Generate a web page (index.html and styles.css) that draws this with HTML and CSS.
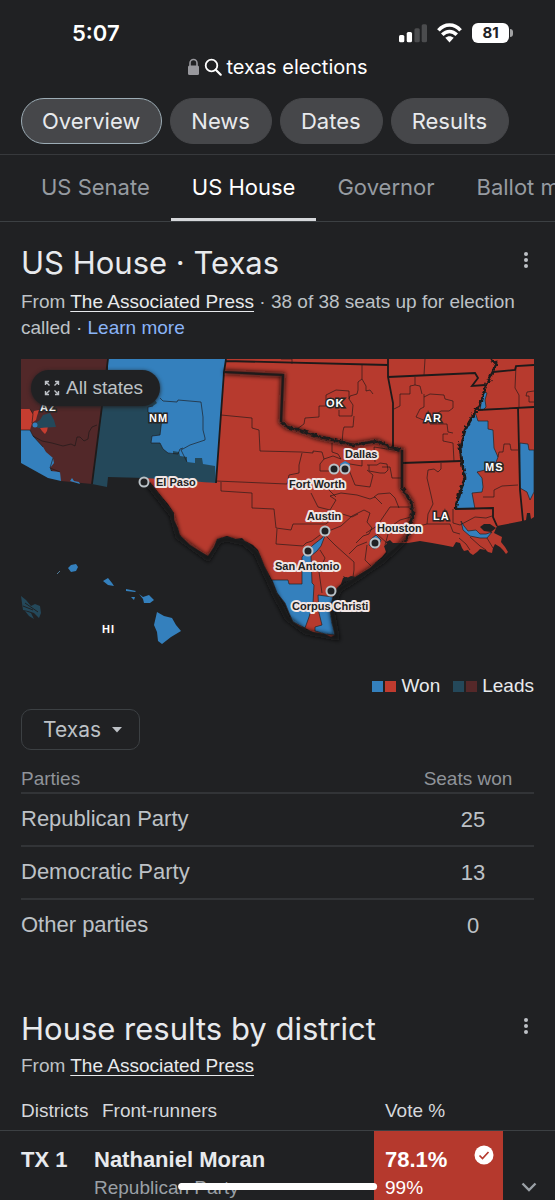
FILE: index.html
```html
<!DOCTYPE html>
<html lang="en">
<head>
<meta charset="utf-8">
<meta name="viewport" content="width=device-width, initial-scale=1">
<title>texas elections</title>
<link rel="stylesheet" href="styles.css">
</head>
<body>
<header class="top">
  <div class="status">
    <span class="clock">5:07</span>
    <div class="indicators">
      <svg width="28" height="20" viewBox="0 0 29 20" aria-hidden="true"><rect x="0" y="12" width="5.500" height="7.500" rx="1.600" fill="#fff"/><rect x="8" y="9" width="5.500" height="10.500" rx="1.600" fill="#fff"/><rect x="16" y="5" width="5.500" height="14.500" rx="1.600" fill="#4b4c4e"/><rect x="23.500" y="1" width="5.500" height="18.500" rx="1.600" fill="#4b4c4e"/></svg>
      <svg width="25" height="20" viewBox="0 0 26 20" aria-hidden="true"><g fill="none" stroke="#fff" stroke-width="3.700"><path d="M1.500 7.200C8-.2 18-.2 24.500 7.200"/><path d="M5.500 11.800c4.300-4.500 10.700-4.500 15 0"/></g><path d="M8.600 15c2.600-2.300 6.200-2.300 8.800 0L13 19.800z" fill="#fff"/></svg>
      <span class="battery">81</span>
    </div>
  </div>
  <div class="address">
    <svg width="13" height="18" viewBox="0 0 13 18" aria-hidden="true"><rect x="1" y="7.500" width="11" height="9.500" rx="1.500" fill="#98989d"/><path d="M3 8V5a3.500 3.500 0 0 1 7 0v3" fill="none" stroke="#98989d" stroke-width="1.600"/></svg>
    <svg width="18" height="18" viewBox="0 0 18 18" aria-hidden="true"><circle cx="7.500" cy="7.500" r="5.800" fill="none" stroke="#fff" stroke-width="1.800"/><path d="M11.700 11.700l5 5" stroke="#fff" stroke-width="2.200" stroke-linecap="round"/></svg>
    <span>texas elections</span>
  </div>
  <div class="chips">
    <button class="chip chip-on" type="button">Overview</button>
    <button class="chip" type="button">News</button>
    <button class="chip" type="button">Dates</button>
    <button class="chip" type="button">Results</button>
  </div>
</header>
<nav class="tabs">
  <a class="tab" href="#senate">US Senate</a>
  <a class="tab tab-on" href="#house">US House</a>
  <a class="tab" href="#governor">Governor</a>
  <a class="tab" href="#ballot">Ballot measures</a>
</nav>
<main>
  <section class="panel" id="house">
    <div class="heading">
      <h2>US House · Texas</h2>
      <button class="more" type="button" aria-label="More options"><svg width="6" height="18" viewBox="0 0 6 18"><g fill="#bdc1c6"><circle cx="3" cy="3" r="2"/><circle cx="3" cy="9" r="2"/><circle cx="3" cy="15" r="2"/></g></svg></button>
    </div>
    <p class="source">From <a class="src" href="#ap">The Associated Press</a> · 38 of 38 seats up for election called · <a class="learn" href="#more">Learn more</a></p>
    <div class="map">
      <svg class="map-art" viewBox="21 359 513 300" role="img" aria-label="House results map">
        <defs>
          <filter id="rough" x="-5%" y="-5%" width="110%" height="110%"><feTurbulence type="fractalNoise" baseFrequency="0.25" numOctaves="2" seed="4" result="n"/><feDisplacementMap in="SourceGraphic" in2="n" scale="5" xChannelSelector="R" yChannelSelector="G"/></filter>
          <filter id="soft" x="-10%" y="-10%" width="120%" height="120%"><feGaussianBlur stdDeviation="2"/></filter>
        </defs>
        <path fill="#3480bd" d="M108 359H226L224 372 216 483 145 478 108 470z"/>
        <path fill="#24485a" d="M105 385L148 390 157 403 153 406 148 407 148 412 154 417 162 418 160 435 152 436 151 443 160 443 163 449 168 453 173 454 173 451 179 452 180 456 187 457 187 462 195 463 195 458 202 458 203 464 215 466 216 483 145 478 108 477 107 487 92 484z"/>
        <path fill="#522829" d="M21 359H108L92 484 61 481 50 468 21 432z"/>
        <path fill="#3480bd" d="M21 430L30 430 33 436 43 447 46 452 53 458 54 463 50 468 51 471 60 472 61 481 48 478 21 463zM70 481L72 478 74 481 79 482 80 484z"/>
        <path fill="#c63d30" d="M21 409L30 409 33 414 34 411 39 410 37 416 36 420 32 423 30 430 21 430zM40 428L48 426 47 431 45 434 42 431z"/>
        <path fill="#24485a" d="M34 424L40 420 43 415 50 413 54 420 56 427 38 428z"/>
        <circle cx="35" cy="425" r="2.500" fill="#3480bd"/>
        <path class="thin" d="M21 430H30L33 436 43 447M30 409L33 414 32 423M33 436L42 441 52 443 63 446 71 444 75 446 77 437 80 437 84 441 88 439 89 432 92 427 97 425M153 406L148 407 148 412 154 417 162 418 160 435 152 436 151 443 160 443 163 449 168 453 178 454 180 449 183 448M160 398L163 401 177 402 178 400 201 402 203 417 203 430 205 438 205 440 190 445 181 450 187 462M53 458L50 468 60 472"/>
        <path class="edge" fill="none" d="M108 359L92 484"/>
        <path fill="#b73a2e" d="M226 359H534V517L531 519 530 513 527 513 526 520 522 521 512 523 502 525 497 526 494 533 502 537 501 542 505 547 508 552 506 554 503 550 500 547 495 544 493 548 492 553 488 552 486 550 480 549 477 552 473 555 470 553 468 550 464 551 462 548 460 543 456 542 453 547 443 545 432 543 420 541 408 543 398 543 390 549 388 543 384 546 386 552 382 557 376 562 370 568 360 574 350 580 347 577 343 578 341 584 337 588 333 597 330 610 332 623 335 635 331 637 325 634 313 632 305 628 299 626 293 622 289 613 285 603 277 593 272 580 265 567 258 550 253 545 245 541 242 538 236 539 227 536 217 539 214 547 208 556 198 550 190 545 180 535 178 528 174 520 174 513 168 504 162 497 150 482 145 478 216 483 224 372z"/>
        <path fill="#202122" d="M480 527L484 524 490 524 496 528 491 532 484 531z"/>
        <g fill="#3480bd" stroke="#222" stroke-width=".7">
          <path d="M475 412L478 421 488 421 488 429 493 430 494 448 498 457 495 465 485 470 477 472 482 478 483 487 482 492 472 493 475 509 455 509 460 492 465 478 462 463 460 447 465 430zM480 410L482 398 485 392 487 393 485 400 486 407 483 410zM520 443L528 444 529 450 534 450V492L530 500 527 492 520 488z"/>
          <path d="M461 521L464 526 468 531 476 530 480 534 486 534 492 532 487 538 480 538 470 536 463 530z"/>
          <path d="M272 580L288 580 289 584 302 584 302 557 307 551 313 545 322 538 326 533 321 546 317 551 311 556 312 583 314 585 313 603 309 617 305 628 293 622 289 613 285 603 277 593zM318 595L333 597 330 610 332 623 335 635 325 634 315 631 315 627 322 625 319 613z"/>
          <path d="M371 539L376 535 381 540 379 546 374 549 369 545z"/>
        </g>
        <g class="thin">
          <path d="M221 415L252 418 252 428 259 430 260 451 301 452 313 453 313 451 322 452 324 459M216 481L287 484 289 475 299 473 299 465 302 453M221 482L221 491 252 493 252 508 274 509 276 528 291 530 293 524 326 524 339 513 352 517 358 514M276 544L277 529M276 544L303 546 306 543 312 541 320 535"/>
          <path d="M332 443L332 452 338 454 341 459 333 456 324 459 320 464 320 471 333 471 344 463 362 466 362 459M349 470L355 485 370 487 373 475 367 470M367 465H377L380 463 387 464 388 470 385 473 380 473 369 471V465M311 493L318 507 330 510 336 500 330 496 341 493 357 495 370 499 375 497 382 504M374 497L378 494 390 493 395 498 399 508M375 462L374 447 400 451M336 497L326 487M402 478H392L390 467 382 467"/>
          <path d="M326 532L341 526 352 516 364 510 370 513 367 522 372 528 369 534 363 536 356 543M325 535L335 545 345 554 354 562 354 570 353 577M320 550L325 558 319 572 322 593M349 554L357 546 367 542M366 533L377 526 390 507M390 507L413 507M377 534L388 544M367 545L365 560 371 566M385 545L390 527 400 520 411 517"/>
          <path d="M281 359H292V364M362 365V379L358 382V390L357 394 350 396 349 399M349 399V391L336 390 326 395 326 406 319 406 319 417 305 418 304 424 297 429M349 399L353 405 352 416H339V410M354 416L353 427 344 427 343 431 342 443M362 379L366 386 366 391 370 390 373 394M425 359L424 375M400 394V406L394 409M400 394H410V386L415 385V377M415 385L420 386 422 394M424 397L430 394 444 395 445 399 453 401 453 408 449 411 441 411 426 421 416 417 420 409 424 407V394M430 424L447 424 448 432 453 433M448 434H443V441L453 443 454 461"/>
          <path d="M441 463V469L438 472 434 469 428 470 427 478 431 495 433 504 428 514 427 524M427 524H450L453 532 460 534M453 509V523L460 525 475 517 486 518 492 516M427 524L415 527M498 457L499 452H503L504 444 510 444 511 450 518 450M483 497H494V490L502 486 518 485M516 366L515 388 519 395 519 408M534 391L527 392 526 396 529 396 529 402 534 402M459 538L466 544 470 550M470 537L480 546 486 550M487 538L493 548"/>
        </g>
        <g class="edge" fill="none">
          <path d="M226 361L388 365M388 359V377L393 403V447M388 377L475 373 478 378 472 386 485 385M493 372L515 370 516 366 534 365M478 410L534 407M518 408L520 490 523 521M402 463L461 461M455 509L493 508V517L497 526M216 483L224 372 226 359"/>
          <path class="river" filter="url(#rough)" d="M490 359L496 363 493 372 486 385 482 400 475 412 465 430 460 447 462 463 465 478 460 492 455 509"/>
        </g>
        <path fill="none" stroke="#141414" stroke-opacity=".8" stroke-width="5" filter="url(#soft)" d="M224 372L283 375 281 422 287 427 300 431 317 437 334 441 353 445 377 441 390 448 402 450V488L411 502 413 512 408 535 400 545 384 560 352 582 339 590 332 610 337 638 305 632 287 618 275 595 256 553 244 543 227 539 219 541 208 559 178 537 172 515 148 484"/>
        <path fill="none" stroke="#1e1a1a" stroke-width="2.200" d="M224 372L283 375 281 422M402 450V488"/>
        <path fill="none" stroke="#1e1a1a" stroke-width="2.600" filter="url(#rough)" d="M281 422L287 427 300 430 317 436 334 440 353 445 377 441 390 447 402 450M402 488L411 502 413 512 408 535 405 542"/>
        <path fill="#202122" d="M388 546L386 542 390 540 393 543 400 543 394 549 387 554zM346 582L343 576 347 578 351 576 356 577z"/>
        <g fill="#3480bd">
          <path d="M68 568L71 565 76 564 78 567 76 571 71 572zM103 581L108 578 112 583 114 586 108 585zM126 589L136 591 135 592 126 591zM131 597L135 597 134 600zM139 594L143 597 149 595 154 600 150 603 144 603 143 599zM157 612L164 616 172 618 176 625 181 631 171 637 162 644 158 641 157 632 154 625z"/>
          <path d="M57 574L60 571" stroke="#507b98" fill="none"/>
          <path fill="#24485a" d="M21 596L26 600 31 606 35 604 40 606 41 613 39 618 34 613 28 611 23 610zM25 611L31 613 34 619 29 616z"/>
          <path d="M25 603L38 612M23 606L33 610" stroke="#202122" fill="none"/>
        </g>
        <g class="state">
          <text x="40" y="411">AZ</text><text x="149" y="422">NM</text><text x="326" y="407">OK</text><text x="424" y="422">AR</text><text x="485" y="471">MS</text><text x="433" y="520">LA</text><text x="102" y="633">HI</text>
        </g>
        <path d="M340 464L345 461 350 464 349 472 342 472z" fill="#3480bd"/>
        <g class="pin"><circle cx="144" cy="482" r="4.500"/><circle cx="334" cy="469" r="4.500"/><circle cx="345" cy="469" r="4.500"/><circle cx="325" cy="531" r="4.500"/><circle cx="308" cy="551" r="4.500"/><circle cx="375" cy="543" r="4.500"/><circle cx="331" cy="591" r="4.500"/></g>
        <g class="city">
          <text x="156" y="486">El Paso</text><text x="345" y="458">Dallas</text><text x="289" y="488">Fort Worth</text><text x="307" y="520">Austin</text><text x="377" y="532">Houston</text><text x="275" y="570">San Antonio</text><text x="292" y="610">Corpus Christi</text>
        </g>
      </svg>
      <button class="all" type="button"><svg width="16" height="16" viewBox="0 0 16 16" aria-hidden="true"><path d="M1.500 5V1.500H5M1.500 1.500L5.500 5.500M11 1.500H14.500V5M14.500 1.500L10.500 5.500M1.500 11V14.500H5M1.500 14.500L5.500 10.500M14.500 11V14.500H11M14.500 14.500L10.500 10.500" fill="none" stroke="#bdc1c6" stroke-width="1.400"/></svg>All states</button>
    </div>
    <div class="legend">
      <span class="key"><i class="sw blue"></i><i class="sw red"></i>Won</span>
      <span class="key"><i class="sw teal"></i><i class="sw maroon"></i>Leads</span>
    </div>
    <div class="picker">
      <select class="select" aria-label="State"><option>Texas</option></select>
      <svg class="caret" width="10" height="6" viewBox="0 0 10 6" aria-hidden="true"><path d="M0 0H10L5 5.500z" fill="#bdc1c6"/></svg>
    </div>
    <table class="seats">
      <thead><tr><th scope="col">Parties</th><th scope="col" class="num">Seats won</th></tr></thead>
      <tbody>
        <tr><td>Republican Party</td><td class="num">25</td></tr>
        <tr><td>Democratic Party</td><td class="num">13</td></tr>
        <tr><td>Other parties</td><td class="num">0</td></tr>
      </tbody>
    </table>
  </section>
  <section class="districts">
    <div class="panel">
      <div class="heading">
        <h2>House results by district</h2>
        <button class="more" type="button" aria-label="More options"><svg width="6" height="18" viewBox="0 0 6 18"><g fill="#bdc1c6"><circle cx="3" cy="3" r="2"/><circle cx="3" cy="9" r="2"/><circle cx="3" cy="15" r="2"/></g></svg></button>
      </div>
      <p class="source">From <a class="src" href="#ap">The Associated Press</a></p>
    </div>
    <table class="races">
      <colgroup><col class="c-id"><col><col class="c-vote"><col class="c-open"></colgroup>
      <thead><tr><th scope="col" class="id">Districts</th><th scope="col" class="front">Front-runners</th><th scope="col" class="votes">Vote %</th><td></td></tr></thead>
      <tbody><tr>
        <td class="id strong">TX 1</td>
        <td><div class="strong">Nathaniel Moran</div><div class="party">Republican Party</div></td>
        <td class="votes won">
          <div class="share"><span class="strong">78.1%</span><svg width="20" height="20" viewBox="0 0 20 20" role="img" aria-label="Winner"><circle cx="10" cy="10" r="9.500" fill="#fff"/><path d="M5.500 10.500l3 3 6-6.500" fill="none" stroke="#b5392d" stroke-width="1.700"/></svg></div>
          <div>99%</div>
        </td>
        <td class="open"><button class="expand" type="button" aria-label="Show all candidates"><svg width="16" height="10" viewBox="0 0 16 10"><path d="M1.500 1.500L8 8l6.500-6.500" fill="none" stroke="#9aa0a6" stroke-width="2.400"/></svg></button></td>
      </tr></tbody>
    </table>
  </section>
</main>
<div class="home-bar"></div>
</body>
</html>
```
FILE: styles.css
```css
* { box-sizing: border-box; }
body {
  margin: 0;
  height: 100vh;
  overflow: hidden;
  background: #202123;
  color: #bdc1c6;
  font-family: "Liberation Sans", Arial, sans-serif;
  font-size: 19px;
  line-height: 26px;
}
button, select { font: inherit; color: inherit; border: 0; background: none; padding: 0; margin: 0; }
svg { display: block; flex: none; }
h2, p { margin: 0; }

.top { border-bottom: 1px solid #37393c; padding-bottom: 10px; }
.status {
  display: flex;
  justify-content: space-between;
  align-items: center;
  padding: 20px 46px 0 72px;
  color: #fff;
  font-family: Inter, sans-serif;
}
.clock { font-size: 22px; font-weight: 600; }
.indicators { display: flex; align-items: center; gap: 10px; }
.battery {
  position: relative;
  width: 37px;
  height: 20px;
  border-radius: 6px;
  background: #fff;
  color: #202123;
  font-size: 15px;
  font-weight: 700;
  line-height: 20px;
  text-align: center;
}
.battery::after {
  content: "";
  position: absolute;
  right: -4px;
  top: 6px;
  width: 3px;
  height: 8px;
  border-radius: 0 3px 3px 0;
  background: #a2a3a4;
}
.address {
  display: flex;
  justify-content: center;
  align-items: center;
  gap: 4px;
  margin-top: 8px;
  color: #fff;
  font-family: Inter, sans-serif;
  font-size: 20px;
}
.chips { display: flex; gap: 8px; padding: 18px 21px 0; }
.chip {
  height: 46px;
  padding: 0 21px 0 20px;
  border: 1px solid #46474a;
  border-radius: 23px;
  background: #46474a;
  color: #e8eaed;
  font-family: Inter, sans-serif;
  font-size: 22px;
}
.chip-on { border-color: #9cacb5; }

.tabs {
  display: flex;
  overflow: hidden;
  padding-left: 20px;
  border-bottom: 1px solid #3c4043;
  font-family: Inter, sans-serif;
  font-size: 22px;
  white-space: nowrap;
}
.tab {
  padding: 19px 21px 18px;
  border-bottom: 3px solid transparent;
  color: #969ba1;
  text-decoration: none;
}
.tab-on { color: #fff; border-color: #d5d7da; }

.panel { padding: 0 21px; }
.heading { display: flex; justify-content: space-between; align-items: flex-start; padding-top: 21px; }
h2 { color: #e8eaed; font: 400 31px/40px Inter, sans-serif; }
.more { padding: 8px 5px; }
.source { padding-top: 6px; color: #bdc1c6; }
.src { color: #e8eaed; text-decoration-thickness: 1px; text-underline-offset: 3px; }
.learn { color: #8ab4f8; text-decoration: none; }

.map { position: relative; margin-top: 18px; }
.map-art { width: 100%; height: auto; }
.thin { fill: none; stroke: #1d1717; stroke-opacity: .8; stroke-width: .8; }
.edge { stroke: #1e1a1a; stroke-width: 1.8; }
.river { stroke-width: 2.8; }
.state text { fill: #fff; stroke: #262626; stroke-width: 3px; paint-order: stroke; font-size: 11px; font-weight: 700; letter-spacing: 1px; }
.city text { fill: #222; stroke: #f1e6e5; stroke-width: 4px; stroke-linejoin: round; paint-order: stroke; font-size: 11px; font-weight: 700; }
.pin circle { fill: #202123; stroke: #b9c1c6; stroke-width: 2; }
.all {
  position: absolute;
  left: 10px;
  top: 11px;
  display: flex;
  align-items: center;
  gap: 6px;
  height: 36px;
  padding: 0 17px 0 13px;
  border-radius: 18px;
  background: #202123;
  box-shadow: 0 1px 4px #202123;
  color: #bdc1c6;
}

.legend { display: flex; justify-content: flex-end; gap: 13px; margin-top: 14px; color: #e8eaed; }
.key { display: flex; align-items: center; }
.sw { width: 11px; height: 11px; margin-right: 2px; }
.sw + .sw { margin-right: 5px; }
.blue { background: #3480bd; }
.red { background: #c03b2f; }
.teal { background: #24485a; }
.maroon { background: #552829; }

.picker { position: relative; display: inline-block; margin-top: 10px; }
.select {
  display: block;
  appearance: none;
  width: 119px;
  height: 41px;
  padding-left: 21px;
  border: 1px solid #3c4043;
  border-radius: 10px;
  font-family: Inter, sans-serif;
  font-size: 21px;
}
.caret { position: absolute; right: 18px; top: 18px; pointer-events: none; }

table { width: 100%; border-collapse: collapse; }
th, td { padding: 0; text-align: left; font-weight: 400; }
.seats { margin-top: 13px; }
.seats th { height: 30px; padding-top: 2px; border-bottom: 2px solid #323437; color: #8f9399; }
.seats td { height: 53px; padding-bottom: 2px; border-bottom: 2px solid #323437; font-size: 22px; }
.seats tr:last-child td { border-bottom: 0; }
.seats .num { width: 122px; padding-bottom: 0; text-align: center; }
.seats th.num { padding-right: 10px; }

.districts { padding-top: 36px; }
.districts .source { padding-top: 4px; }
.races { table-layout: fixed; margin-top: 15px; }
.c-id { width: 94px; }
.c-vote { width: 129px; }
.c-open { width: 52px; }
.races th { height: 36px; vertical-align: middle; padding-bottom: 2px; color: #d5d8dc; }
.races tbody tr { border-top: 1px solid #3c4043; }
.races td { vertical-align: top; }
.races tbody td { padding-top: 14px; padding-bottom: 14px; }
.races .id { padding-left: 21px; white-space: nowrap; }
.races .front { padding-left: 8px; }
.races .votes { padding-left: 11px; }
.strong { color: #e8eaed; font-size: 22px; font-weight: 700; line-height: 30px; }
.party { color: #9aa0a6; }
.races .won { background: #b5392d; color: #fff; }
.won .strong { color: #fff; }
.share { display: flex; justify-content: space-between; padding-right: 9px; }
.races tbody .open { padding-top: 51px; }
.expand { display: block; margin: 0 auto; }

.home-bar {
  position: fixed;
  left: 50%;
  bottom: 10px;
  width: 36%;
  height: 7px;
  border-radius: 4px;
  background: #fff;
  transform: translateX(-50%);
}
```
